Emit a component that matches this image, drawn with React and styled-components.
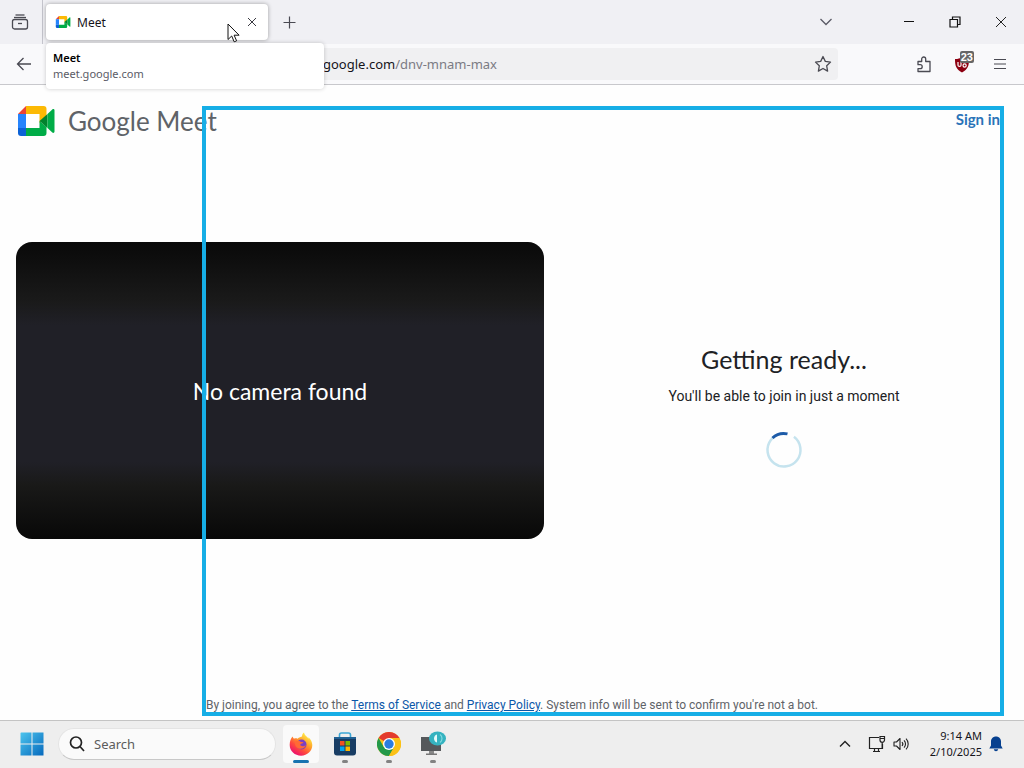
import React from "react";
import styled, { createGlobalStyle } from "styled-components";

const taskbarApps = [
  { name: "Firefox", icon: FirefoxIcon, active: true },
  { name: "Microsoft Store", icon: StoreIcon },
  { name: "Chrome", icon: ChromeIcon },
  { name: "Network monitor", icon: MonitorIcon },
];

const App = () => {
  return (
    <Desktop>
      <GlobalStyle />

      {/* tab strip */}
      <TabStrip>
        <FirefoxView aria-label="Firefox View">
          <ViewIcon />
        </FirefoxView>
        <Tab>
          <MeetIcon size={16} />
          <TabTitle>Meet</TabTitle>
          <TabClose aria-label="Close tab">
            <svg width="10" height="10" viewBox="0 0 10 10" fill="none" stroke="#3a3a42">
              <path d="M1 1l8 8M9 1l-8 8" />
            </svg>
          </TabClose>
          <TabTooltip role="tooltip">
            <strong>Meet</strong>
            <span>meet.google.com</span>
          </TabTooltip>
          <Cursor width="13" height="20" viewBox="0 0 13 20">
            <path
              d="M1 1v15.500l3.700-3.500 2.500 5.800 2.400-1-2.500-5.600h5z"
              fill="#fff"
              stroke="#111"
              strokeLinejoin="miter"
            />
          </Cursor>
        </Tab>
        <ChromeButton aria-label="New tab">
          <svg width="13" height="13" viewBox="0 0 13 13" stroke="#4a4a52" strokeWidth="1.200">
            <path d="M6.500 0.500v12M0.500 6.500h12" />
          </svg>
        </ChromeButton>
        <WindowControls>
          <WindowButton $width={120} aria-label="List all tabs">
            <svg width="14" height="8" viewBox="0 0 14 8" fill="none" stroke="#5b5b66" strokeWidth="1.300">
              <path d="M1.500 1L7 6.500 12.500 1" />
            </svg>
          </WindowButton>
          <WindowButton aria-label="Minimize">
            <svg width="12" height="12" viewBox="0 0 12 12" stroke="#111">
              <path d="M1 5.500h10" />
            </svg>
          </WindowButton>
          <WindowButton aria-label="Restore">
            <svg width="12" height="12" viewBox="0 0 12 12" fill="none" stroke="#111" strokeWidth="1.200">
              <path d="M1 3.500h7.500V11H1zM3.500 3.500V1H11v7.500H8.500" />
            </svg>
          </WindowButton>
          <WindowButton aria-label="Close">
            <svg width="12" height="12" viewBox="0 0 12 12" stroke="#222">
              <path d="M1 1l10 10M11 1L1 11" />
            </svg>
          </WindowButton>
        </WindowControls>
      </TabStrip>

      {/* toolbar */}
      <Toolbar>
        <ToolButton aria-label="Back">
          <svg width="16" height="14" viewBox="0 0 16 14" fill="none" stroke="#4a4a52" strokeWidth="1.300">
            <path d="M15 7H1.500M7.500 1l-6 6 6 6" />
          </svg>
        </ToolButton>
        <UrlBar>
          <label htmlFor="url">google.com</label>
          <input id="url" type="text" defaultValue="/dnv-mnam-max" />
          <StarButton aria-label="Bookmark this page">
            <svg width="18" height="18" viewBox="0 0 18 18" fill="none" stroke="#4a4a52" strokeWidth="1.300">
              <path
                d="M9 1.500l2.300 4.900 5.200.7-3.800 3.700.9 5.300L9 13.500l-4.600 2.600.9-5.300L1.500 7.100l5.200-.7z"
                strokeLinejoin="round"
              />
            </svg>
          </StarButton>
        </UrlBar>
        <Extensions>
          <ToolButton aria-label="Extensions">
            <svg width="16" height="17" viewBox="0 0 16 17" fill="none" stroke="#4a4a52" strokeWidth="1.300">
              <path
                d="M2 5.500h3.700V3a2 2 0 0 1 4 0v2.500H14v10H2v-2.800h2.200a2 2 0 0 0 0-4H2z"
                strokeLinejoin="round"
              />
            </svg>
          </ToolButton>
          <ToolButton aria-label="uBlock Origin">
            <svg width="16" height="17" viewBox="0 0 16 17">
              <path d="M8 1c2 1.500 4 2 7 2 0 7-1 10-7 13.500C2 13 1 10 1 3c3 0 5-.5 7-2z" fill="#8d0011" />
              <path
                d="M4 6v3.200c0 1.600 3 1.600 3 0V6M9 9.500a1.600 1.600 0 1 0 3.200 0 1.600 1.600 0 0 0-3.200 0"
                fill="none"
                stroke="#fff"
                strokeWidth="1.200"
              />
            </svg>
            <Badge>23</Badge>
          </ToolButton>
          <ToolButton aria-label="Open application menu">
            <svg width="14" height="12" viewBox="0 0 14 12" stroke="#4a4a52" strokeWidth="1.200">
              <path d="M1 1.500h12M1 6h12M1 10.500h12" />
            </svg>
          </ToolButton>
        </Extensions>
      </Toolbar>

      {/* meeting page */}
      <Page>
        <PageHeader>
          <Brand>
            <MeetIcon size={40} />
            <span>
              <b>Google</b> Meet
            </span>
          </Brand>
          <SignIn href="#signin">Sign in</SignIn>
        </PageHeader>
        <Lobby>
          <VideoPreview>No camera found</VideoPreview>
          <Status>
            <h1>Getting ready...</h1>
            <p>You'll be able to join in just a moment</p>
            <Spinner width="38" height="38" viewBox="0 0 38 38">
              <circle
                cx="19"
                cy="19"
                r="16.500"
                stroke="#c5e3ee"
                strokeWidth="2.500"
                strokeDasharray="82 22"
                transform="rotate(-53 19 19)"
              />
              <path d="M7.500 7A16.500 16.500 0 0 1 22.500 2.900" stroke="#1d5ba8" strokeWidth="3" />
            </Spinner>
          </Status>
        </Lobby>
        <PageFooter>
          By joining, you agree to the <a href="#terms">Terms of Service</a> and{" "}
          <a href="#privacy">Privacy Policy</a>. System info will be sent to confirm you're not a bot.
        </PageFooter>
        <CaptureFrame />
      </Page>

      {/* taskbar */}
      <Taskbar>
        <StartButton aria-label="Start">
          <svg width="24" height="24" viewBox="0 0 24 24">
            <defs>
              <linearGradient id="win" x1="0" y1="0" x2="1" y2="1">
                <stop offset="0" stopColor="#4cc5ee" />
                <stop offset="1" stopColor="#0669bd" />
              </linearGradient>
            </defs>
            <path
              d="M1 .5h10.500V11.500H.500V1zM12.500.5h11v11h-11zM.500 12.500h11v11H.500zM12.500 12.500h11v11h-11z"
              fill="url(#win)"
            />
          </svg>
        </StartButton>
        <SearchBox>
          <svg width="16" height="16" viewBox="0 0 16 16" fill="none" stroke="#222" strokeWidth="1.700">
            <circle cx="7" cy="6.500" r="5.500" />
            <path d="M11 10.500l4 4.500" />
          </svg>
          <input type="search" placeholder="Search" aria-label="Search" />
        </SearchBox>
        <AppList>
          {taskbarApps.map(({ name, icon: Icon, active }) => (
            <AppButton key={name} aria-label={name} $active={active}>
              <Icon />
            </AppButton>
          ))}
        </AppList>
        <Tray>
          <TrayButton aria-label="Show hidden icons">
            <svg width="12" height="8" viewBox="0 0 12 8" fill="none" stroke="#222" strokeWidth="1.400">
              <path d="M1 6.500l5-5 5 5" />
            </svg>
          </TrayButton>
          <TrayButton aria-label="Network">
            <svg width="18" height="18" viewBox="0 0 18 18" fill="none" stroke="#222" strokeWidth="1.200">
              <path d="M11 2.500H1.500v11h13V9M5 16.500h7M6.500 13.500v3M10.500 13.500v3" />
              <path d="M12 1.500h4.500V5a2.200 2.200 0 0 1-4.500 0zM12 3.500h4.500M14.200 7v6" />
            </svg>
          </TrayButton>
          <TrayButton aria-label="Volume">
            <svg width="16" height="14" viewBox="0 0 16 14" fill="none" stroke="#222" strokeWidth="1.100">
              <path d="M1 5h2.500L7 1.500v11L3.500 9H1z" strokeLinejoin="round" />
              <path d="M9 5a3 3 0 0 1 0 4M11 3.300a5.300 5.300 0 0 1 0 7.400M13 1.700a7.500 7.500 0 0 1 0 10.600" />
            </svg>
          </TrayButton>
          <Clock>
            <span>9:14 AM</span>
            <span>2/10/2025</span>
          </Clock>
          <TrayButton aria-label="Notifications">
            <svg width="14" height="16" viewBox="0 0 14 16" fill="#07408f">
              <path d="M7 .500c3 0 5 2.200 5 5V9.500l1.700 3H.300L2 9.500v-4c0-2.800 2-5 5-5zM4.800 13.300h4.400c-.3 1.300-1 2-2.200 2s-1.900-.7-2.200-2z" />
            </svg>
          </TrayButton>
        </Tray>
      </Taskbar>
    </Desktop>
  );
};

export default App;

/* icons */
function MeetIcon({ size }) {
  return (
    <svg width={size} height={size} viewBox="0 0 40 40" aria-hidden="true">
      <path d="M2 13L10 5v8z" fill="#ea4335" />
      <path d="M10 5h17.500a3 3 0 0 1 3 3v6.500l-7 7.500v-9H10z" fill="#fcb904" />
      <path d="M2 13h8v14H2z" fill="#2684fc" />
      <path d="M2 27h8v8H5a3 3 0 0 1-3-3z" fill="#0b62d6" />
      <path d="M10 27h13.500v-7l7 6v6a3 3 0 0 1-3 3H10z" fill="#00ac47" />
      <path d="M23.500 20l8-7v14z" fill="#00832d" />
      <path d="M31.500 13l4.800-4.500c.9-.8 2.200-.3 2.200 1v21c0 1.300-1.300 1.800-2.200 1L31.500 27z" fill="#00ac47" />
    </svg>
  );
}

function ViewIcon() {
  return (
    <svg width="18" height="18" viewBox="0 0 18 18" fill="none" stroke="#4a4a52" strokeWidth="1.300">
      <path d="M4.500 2h9" />
      <path d="M3 4.500h12" />
      <rect x="1.500" y="6.500" width="15" height="9.500" rx="2" />
      <path d="M7 10.500h4" />
    </svg>
  );
}

function FirefoxIcon() {
  return (
    <svg width="24" height="24" viewBox="0 0 24 24">
      <defs>
        <linearGradient id="fox" x1=".8" y1=".1" x2=".25" y2=".9">
          <stop offset="0" stopColor="#fff04a" />
          <stop offset=".35" stopColor="#ffa72b" />
          <stop offset=".7" stopColor="#ff4b3c" />
          <stop offset="1" stopColor="#ef1869" />
        </linearGradient>
      </defs>
      <path
        d="M3.500 4.500c.4 1 .9 1.600 1.500 2.200 1.200-.5 2.400-.5 3.600 0C10 5.500 12 5 13 4.600c0-1.600.6-3.100 2-4.100.3 2.500 2 3.300 3.400 4.800.4.400.7.900 1 1.400.2-.5.2-1 .1-1.500 2.300 2 3.800 5 3.800 7.900 0 6-5 10.600-11.200 10.600C5.700 23.700.700 19 .700 13c0-3.500 1-6.200 2.800-8.500z"
        fill="url(#fox)"
      />
      <circle cx="12.500" cy="12.500" r="5" fill="#7a3fc4" />
      <path
        d="M6.500 9.200c2-.8 4-.2 5 .5 1.300.2 2.500.3 3 .8-.8 1.200-2.800 1-3.300 2.300.8 2 4 1.700 5.700.2-.8 4-7 5.500-10 1.500-1-1.600-1-3.700-.4-5.300z"
        fill="#ff6a35"
      />
    </svg>
  );
}

function StoreIcon() {
  return (
    <svg width="24" height="24" viewBox="0 0 24 24">
      <path d="M6.500 6V3a2 2 0 0 1 2-2h7a2 2 0 0 1 2 2v3" fill="none" stroke="#3ba7d6" strokeWidth="1.600" />
      <path d="M1 5h22v15.500a3 3 0 0 1-3 3H4a3 3 0 0 1-3-3z" fill="#173c63" />
      <path d="M1 5h22v2H1z" fill="#1f5f92" />
      <path d="M7 9h4.500v4.500H7z" fill="#f25022" />
      <path d="M12.500 9H17v4.500h-4.500z" fill="#7fba00" />
      <path d="M7 14.500h4.500V19H7z" fill="#00a4ef" />
      <path d="M12.500 14.500H17V19h-4.500z" fill="#ffb900" />
    </svg>
  );
}

function ChromeIcon() {
  return (
    <svg width="24" height="24" viewBox="0 0 24 24">
      <circle cx="12" cy="12" r="12" fill="#fbc116" />
      <path d="M12 12L1.600 6A12 12 0 0 1 22.400 6H12z" fill="#e33b2e" />
      <path d="M1.600 6A12 12 0 0 0 12 24l5.200-9L12 12l-5.200 3z" fill="#23994a" />
      <path d="M12 6h10.400A12 12 0 0 1 12 24l5.200-9z" fill="#fbc116" />
      <circle cx="12" cy="12" r="6" fill="#fff" />
      <circle cx="12" cy="12" r="4.700" fill="#2a7de1" />
    </svg>
  );
}

function MonitorIcon() {
  return (
    <svg width="26" height="26" viewBox="0 0 26 26">
      <path d="M1 6h20v14H1z" fill="#55585b" />
      <path d="M9 20h5v3H9z" fill="#888" />
      <path d="M6 22.500h11v1.500H6z" fill="#777" />
      <ellipse cx="17.500" cy="7.500" rx="8.500" ry="7" fill="#35b3c0" />
      <path d="M17 3.500v8c-4-1-4-7 0-8z" fill="#e6fafa" />
      <path d="M20 3.500a5 5 0 0 1 0 8" fill="none" stroke="#82d9df" strokeWidth="1.200" />
    </svg>
  );
}

/* styles */
const uiFont = `"Noto Sans", "Open Sans", sans-serif`;
const brandFont = `Lato, "Open Sans", sans-serif`;

const GlobalStyle = createGlobalStyle`
  * {
    box-sizing: border-box;
  }

  body {
    margin: 0;
    font-family: ${uiFont};
    color: #15141a;
  }

  button {
    display: flex;
    align-items: center;
    justify-content: center;
    padding: 0;
    border: 0;
    background: none;
  }

  input {
    min-width: 0;
    padding: 0;
    border: 0;
    outline: 0;
    background: none;
    font-family: inherit;
  }
`;

const Desktop = styled.div`
  display: flex;
  flex-direction: column;
  min-height: 100vh;
`;

const TabStrip = styled.div`
  display: flex;
  align-items: center;
  height: 44px;
  background: #f0f0f4;
`;

const FirefoxView = styled.button`
  width: 43px;
  height: 44px;
  padding-right: 2px;
  border-right: 1px solid #c4c4cc;
`;

const Tab = styled.div`
  position: relative;
  display: flex;
  align-items: center;
  gap: 6px;
  width: 222px;
  height: 36px;
  margin-left: 3px;
  padding: 0 9px;
  border-radius: 4px;
  background: #fff;
  box-shadow: 0 0 4px rgba(0, 0, 0, 0.35);
`;

const TabTitle = styled.span`
  flex: 1;
  font-size: 12px;
`;

const TabClose = styled.button`
  width: 14px;
  height: 24px;
`;

const TabTooltip = styled.div`
  position: absolute;
  z-index: 2;
  top: 39px;
  left: 0;
  display: flex;
  flex-direction: column;
  width: 278px;
  padding: 7px;
  border-radius: 4px;
  background: #fff;
  box-shadow: 0 0 4px rgba(0, 0, 0, 0.2);
  font-size: 11px;
  line-height: 16px;

  strong {
    font-weight: 600;
    color: #000;
  }

  span {
    color: #5b5b66;
  }
`;

const Cursor = styled.svg`
  position: absolute;
  z-index: 3;
  top: 19px;
  left: 181px;
`;

const ChromeButton = styled.button`
  width: 42px;
  height: 36px;
`;

const WindowControls = styled.div`
  display: flex;
  margin-left: auto;
`;

const WindowButton = styled.button`
  width: ${(props) => props.$width || 46}px;
  height: 44px;
`;

const Toolbar = styled.div`
  display: flex;
  align-items: center;
  height: 41px;
  padding: 0 5px;
  border-bottom: 1px solid #c8c8cc;
  background: #f9f9fb;
`;

const ToolButton = styled.button`
  position: relative;
  width: 38px;
  height: 32px;
`;

const UrlBar = styled.div`
  display: flex;
  flex: 1;
  align-items: center;
  height: 32px;
  margin-left: 107px;
  padding-left: 173px;
  border-radius: 4px;
  background: #f0f0f2;
  font-size: 13px;

  input {
    flex: 1;
    font-size: 13px;
    color: #7b7b84;
  }
`;

const StarButton = styled.button`
  width: 30px;
  height: 32px;
`;

const Extensions = styled.div`
  display: flex;
  margin-left: 67px;
`;

const Badge = styled.span`
  position: absolute;
  top: 3px;
  right: 7px;
  padding: 0 1px;
  border-radius: 2px;
  background: #666;
  color: #fff;
  font-size: 11px;
  font-weight: 600;
  line-height: 12px;
`;

const Page = styled.main`
  position: relative;
  display: flex;
  flex: 1;
  flex-direction: column;
  background: #fefefe;
`;

const PageHeader = styled.header`
  display: flex;
  justify-content: space-between;
  height: 72px;
  padding: 16px 24px 0 16px;
`;

const Brand = styled.div`
  display: flex;
  align-items: center;
  gap: 12px;
  height: 40px;
  font-family: ${brandFont};
  font-size: 26px;
  color: #5f6368;

  b {
    font-weight: 400;
  }
`;

const SignIn = styled.a`
  padding-top: 8px;
  font-family: ${brandFont};
  font-size: 15px;
  font-weight: 700;
  line-height: 20px;
  color: #2a73b8;
  text-decoration: none;
`;

const Lobby = styled.section`
  display: grid;
  flex: 1;
  grid-template-columns: minmax(0, 1fr) 448px;
  gap: 16px;
  align-items: center;
  padding: 0 16px;
`;

const VideoPreview = styled.div`
  display: flex;
  align-items: center;
  justify-content: center;
  aspect-ratio: 16 / 9;
  border-radius: 16px;
  background: linear-gradient(#090909, #1a1a1a 20%, #202027 28%, #202027 74%, #191918 82%, #080808);
  font-family: ${brandFont};
  font-size: 23px;
  color: #fff;
`;

const Status = styled.div`
  display: flex;
  flex-direction: column;
  align-items: center;
  padding-top: 32px;
  font-family: ${brandFont};
  color: #202124;

  h1 {
    margin: 0;
    font-size: 25px;
    font-weight: 400;
    line-height: 28px;
  }

  p {
    margin: 13px 0 25px;
    font-family: Roboto, sans-serif;
    font-size: 14px;
    line-height: 20px;
  }
`;

const Spinner = styled.svg`
  fill: none;
`;

const PageFooter = styled.footer`
  height: 96px;
  padding-top: 73px;
  font-family: Roboto, sans-serif;
  font-size: 12px;
  line-height: 16px;
  text-align: center;
  color: #5f6368;

  a {
    color: #0b57a8;
  }
`;

/* outline of the shared region, drawn over the page */
const CaptureFrame = styled.div`
  position: absolute;
  inset: 21px 20px 4px 202px;
  border: 4px solid #16aee6;
  pointer-events: none;
`;

const Taskbar = styled.footer`
  display: flex;
  align-items: center;
  height: 48px;
  padding: 0 21px 2px 20px;
  border-top: 1px solid #c4c4c4;
  background: #eeeeee;
`;

const StartButton = styled.button`
  width: 24px;
  height: 36px;
`;

const SearchBox = styled.div`
  display: flex;
  align-items: center;
  gap: 9px;
  width: 218px;
  height: 32px;
  margin-left: 14px;
  padding: 0 10px;
  border: 1px solid #e4e4e4;
  border-bottom-color: #c8c8c8;
  border-radius: 16px;
  background: #fafafa;

  input {
    flex: 1;
    font-size: 13px;
  }

  input::placeholder {
    color: #5c5c5c;
  }
`;

const AppList = styled.nav`
  display: flex;
  gap: 8px;
  margin-left: 7px;
`;

const AppButton = styled.button`
  position: relative;
  width: 36px;
  height: 38px;
  border-radius: 4px;

  && {
    background: ${(props) => (props.$active ? "#fafafa" : "none")};
  }

  &::after {
    content: "";
    position: absolute;
    bottom: 0;
    width: ${(props) => (props.$active ? 16 : 6)}px;
    height: 3px;
    border-radius: 2px;
    background: ${(props) => (props.$active ? "#1673b0" : "#828282")};
  }
`;

const Tray = styled.div`
  display: flex;
  align-items: center;
  margin-left: auto;
`;

const TrayButton = styled.button`
  height: 32px;
  margin-left: 7px;

  &:first-child {
    margin: 0 10px 0 0;
  }
`;

const Clock = styled.time`
  display: flex;
  flex-direction: column;
  margin-left: 21px;
  font-size: 11px;
  line-height: 16px;
  text-align: right;
`;
